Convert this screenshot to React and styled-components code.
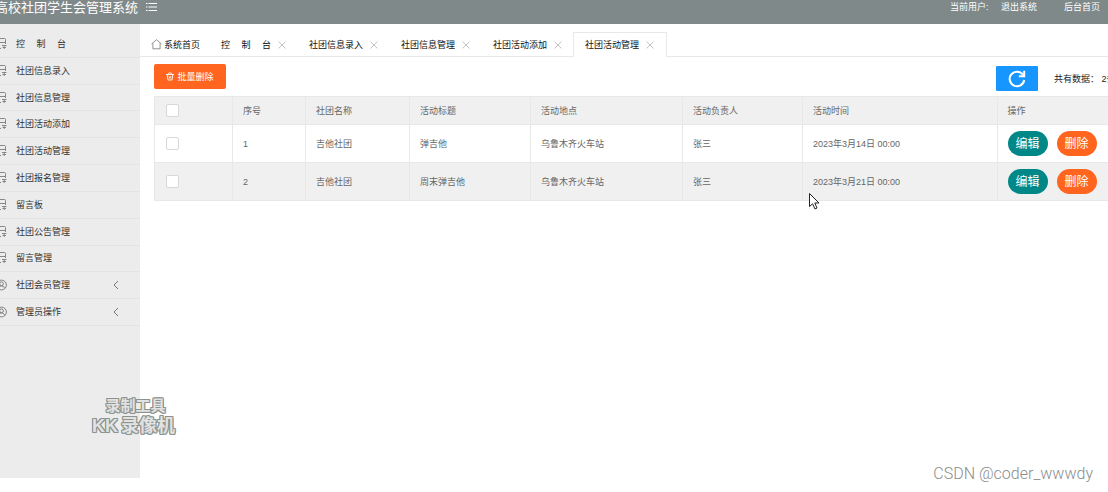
import React from "react";
import styled, { createGlobalStyle } from "styled-components";

const Global = createGlobalStyle`
  *, *::before, *::after { box-sizing: border-box; }
  body {
    margin: 0;
    background: #fff;
    color: #333;
    font: 9px/14px "Liberation Sans", "Noto Sans CJK SC", sans-serif;
    overflow: hidden;
  }
  button, input { font: inherit; margin: 0; }
  a { color: inherit; text-decoration: none; }
`;

const Page = styled.div`
  position: relative;
  min-height: 100vh;
  overflow: hidden;
`;

const Header = styled.header`
  display: flex;
  align-items: flex-start;
  height: 24px;
  background: #808989;
  color: #fff;
`;

const Brand = styled.h1`
  margin: 0 8px 0 -5px;
  font-size: 13px;
  font-weight: 400;
  line-height: 16px;
  white-space: nowrap;
`;

const PlainButton = styled.button`
  display: flex;
  padding: 0;
  border: 0;
  background: none;
  color: inherit;
`;

const MenuButton = styled(PlainButton)`
  padding-top: 2px;
`;

const UserNav = styled.nav`
  display: flex;
  margin-left: auto;
  padding-right: 8px;
  white-space: nowrap;
`;

const UserLabel = styled.span`
  width: 51px;
`;

const UserLink = styled.a`
  & + & { margin-left: 27px; }
`;

const Body = styled.div`
  display: flex;
  align-items: flex-start;
`;

const Sidebar = styled.nav`
  flex: 0 0 140px;
  min-height: 454px;
  padding-top: 7px;
  background: #ececec;
`;

const MenuList = styled.ul`
  display: grid;
  grid-auto-rows: 1fr;
  min-height: 295px;
  margin: 0;
  padding: 0;
  list-style: none;
`;

const MenuItem = styled.li`
  display: flex;
  border-bottom: 1px solid #e4e4e4;
`;

const MenuLink = styled.a`
  display: flex;
  flex: 1;
  align-items: center;
  gap: 9px;
  margin-left: -5px;
  padding-right: 21px;
  white-space: pre;
`;

const MenuText = styled.span`
  flex: 1;
`;

const Main = styled.main`
  flex: 1;
  min-width: 0;
`;

const Tabs = styled.div`
  display: flex;
  margin-top: 8px;
  height: 25px;
  border-bottom: 1px solid #e8e8e8;
`;

const Tab = styled.div`
  display: flex;
  align-items: center;
  gap: 7px;
  height: 25px;
  padding: 0 12px 0 11px;
  border: 1px solid ${(p) => (p.$active ? "#e8e8e8" : "transparent")};
  border-bottom-color: ${(p) => (p.$active ? "#fff" : "transparent")};
  border-width: 1px 0;
  box-shadow: ${(p) => (p.$active ? "-1px 0 #e8e8e8, 1px 0 #e8e8e8" : "none")};
  color: #111;
  white-space: pre;
`;

const HomeTab = styled(Tab)`
  gap: 2px;
  padding-right: 10px;
`;

const Toolbar = styled.div`
  display: flex;
  align-items: flex-start;
  justify-content: space-between;
  padding: 7px 0 5px 14px;
`;

const DeleteButton = styled.button`
  display: flex;
  align-items: center;
  justify-content: center;
  gap: 3px;
  width: 72px;
  height: 25px;
  padding: 0;
  border: 0;
  border-radius: 2px;
  background: #ff651e;
  color: #fff;
`;

const Summary = styled.div`
  display: flex;
  align-items: center;
  gap: 16px;
  width: 112px;
  padding-top: 2px;
  color: #222;
  white-space: nowrap;
`;

const RefreshButton = styled.button`
  display: flex;
  flex: 0 0 42px;
  align-items: center;
  justify-content: center;
  height: 25px;
  padding: 0;
  border: 0;
  border-radius: 1px;
  background: #1896ff;
  color: #fff;
`;

const TableWrap = styled.div`
  padding-left: 14px;
`;

const Table = styled.table`
  width: 100%;
  border-collapse: collapse;
  table-layout: fixed;
  color: #666;
`;

const Col = styled.col`
  width: ${(p) => (p.$width ? `${p.$width}px` : "auto")};
`;

const Row = styled.tr`
  height: ${(p) => (p.$head ? 28 : 38)}px;
  background: ${(p) => (p.$shaded ? "#f0f0f0" : "#fff")};
`;

const cell = `
  padding: 0 0 0 10px;
  border: 1px solid #e8e8e8;
  border-right: 0;
  font-weight: 400;
  text-align: left;
  white-space: nowrap;
`;
const Th = styled.th`${cell}`;
const Td = styled.td`${cell}`;

const Check = styled.input`
  display: block;
  width: 13px;
  height: 13px;
  margin-left: 1px;
  border: 1px solid #d8d8d8;
  border-radius: 2px;
  background: #fff;
  appearance: none;
`;

const Actions = styled.div`
  display: flex;
  gap: 9px;
`;

const Pill = styled.button`
  width: 40px;
  height: 25px;
  padding: 0;
  border: 0;
  border-radius: 13px;
  background: ${(p) => (p.$danger ? "#ff651e" : "#008888")};
  color: #fff;
  && { font-size: 12px; }
`;

const RecorderMark = styled.div`
  position: absolute;
  left: 92px;
  top: 396px;
  display: flex;
  flex-direction: column;
  align-items: center;
  color: #e2e2e2;
  font-family: "Liberation Sans", "Noto Sans CJK SC", sans-serif;
  font-weight: 700;
  text-shadow: 1px 0 #8b9490, -1px 0 #8b9490, 0 1px #8b9490, 0 -1px #8b9490,
    1px 1px #8b9490, -1px -1px #8b9490, 1px -1px #8b9490, -1px 1px #8b9490;
`;

const RecorderCaption = styled.span`
  padding-left: 4px;
  font-size: 15px;
  line-height: 20px;
`;

const RecorderName = styled.span`
  display: flex;
  gap: 3px;
  font-size: 18px;
  line-height: 20px;
`;

const Credit = styled.div`
  position: absolute;
  right: 15px;
  bottom: 8px;
  color: #8c8c8c;
  font-family: Roboto, sans-serif;
  font-size: 16px;
  font-weight: 300;
  line-height: 20px;
`;

const Pointer = styled.svg`
  position: absolute;
  left: 808px;
  top: 192px;
`;

const FormIcon = () => (
  <svg width="12" height="12" viewBox="0 0 12 12" fill="none" stroke="#888">
    <path d="M6 10.500H2.500Q1.500 10.500 1.500 9.500V2Q1.500 0.500 2.500 0.500H9.500Q10.500 0.500 10.500 1.500V6M3 4.500H10.500" />
    <path d="M7 7.500H11.500M7.500 9.500H11M9.200 7.500V11" />
  </svg>
);

const MemberIcon = () => (
  <svg width="12" height="12" viewBox="0 0 12 12" fill="none" stroke="#777" strokeWidth="0.9">
    <circle cx="6.500" cy="6" r="4.900" />
    <circle cx="6.500" cy="4.800" r="1.900" />
    <path d="M3.300 9.300Q4 6.900 6.500 6.900T9.700 9.300" />
  </svg>
);

const ChevronIcon = () => (
  <svg width="6" height="10" viewBox="0 0 6 10" fill="none" stroke="#777">
    <path d="M5 1L1 5L5 9" />
  </svg>
);

const CloseIcon = () => (
  <svg width="8" height="8" viewBox="0 0 8 8" fill="none" stroke="#bbb" strokeWidth="0.9">
    <path d="M0.500 0.500L7.500 7.500M7.500 0.500L0.500 7.500" />
  </svg>
);

const HomeIcon = () => (
  <svg width="11" height="11" viewBox="0 0 11 11" fill="none" stroke="#777" strokeWidth="0.8">
    <path d="M0.500 5L5.500 0.700L10.500 5M1.900 4.200V9.800H9.100V4.200" />
  </svg>
);

const ListIcon = () => (
  <svg width="11" height="10" viewBox="0 0 11 10" stroke="#fff">
    <path d="M0 1.500H1.500M2.500 1.500H11M0 5H1.500M2.500 5H11M0 8.500H1.500M2.500 8.500H11" />
  </svg>
);

const TrashIcon = () => (
  <svg width="8" height="9" viewBox="0 0 8 9" fill="none" stroke="#fff" strokeWidth="0.900">
    <path d="M0 2.500H8M2 2.300Q2.300 0.800 4 0.800T6 2.300M1.300 2.500V5M6.700 2.500V5M1.500 4.500L2 8H6L6.500 4.500M3.300 4.200V6.500M4.700 4.200V6.500" />
  </svg>
);

const RefreshIcon = () => (
  <svg width="18" height="18" viewBox="0 0 18 18" fill="none" stroke="#fff" strokeWidth="2">
    <path d="M15 4.800A7.300 7.300 0 1 0 16.200 10" />
    <path d="M16.200 0.800V6.200H10.800" />
  </svg>
);

const SPACED = "控\u3000 制\u3000 台";

const MENU = [
  SPACED, "社团信息录入", "社团信息管理", "社团活动添加", "社团活动管理",
  "社团报名管理", "留言板", "社团公告管理", "留言管理",
];
const GROUPS = ["社团会员管理", "管理员操作"];
const TABS = [SPACED, "社团信息录入", "社团信息管理", "社团活动添加", "社团活动管理"];
const COLUMNS = ["序号", "社团名称", "活动标题", "活动地点", "活动负责人", "活动时间", "操作"];
const WIDTHS = [78, 73, 104, 121, 152, 120, null, 111];
const ROWS = [
  ["1", "吉他社团", "弹吉他", "乌鲁木齐火车站", "张三", "2023年3月14日 00:00"],
  ["2", "吉他社团", "周末弹吉他", "乌鲁木齐火车站", "张三", "2023年3月21日 00:00"],
];

export default function App() {
  return (
    <Page>
      <Global />
      <Header>
        <Brand>高校社团学生会管理系统</Brand>
        <MenuButton aria-label="菜单"><ListIcon /></MenuButton>
        <UserNav>
          <UserLabel>当前用户:</UserLabel>
          <UserLink href="#logout">退出系统</UserLink>
          <UserLink href="#home">后台首页</UserLink>
        </UserNav>
      </Header>
      <Body>
        <Sidebar>
          <MenuList>
            {MENU.map((name) => (
              <MenuItem key={name}>
                <MenuLink href="#menu"><FormIcon /><MenuText>{name}</MenuText></MenuLink>
              </MenuItem>
            ))}
            {GROUPS.map((name) => (
              <MenuItem key={name}>
                <MenuLink href="#menu"><MemberIcon /><MenuText>{name}</MenuText><ChevronIcon /></MenuLink>
              </MenuItem>
            ))}
          </MenuList>
        </Sidebar>
        <Main>
          <Tabs>
            <HomeTab><HomeIcon /><a href="#home">系统首页</a></HomeTab>
            {TABS.map((name, i) => (
              <Tab key={name} $active={i === TABS.length - 1}>
                <a href="#tab">{name}</a>
                <PlainButton aria-label="关闭"><CloseIcon /></PlainButton>
              </Tab>
            ))}
          </Tabs>
          <Toolbar>
            <DeleteButton><TrashIcon />批量删除</DeleteButton>
            <Summary>
              <RefreshButton aria-label="刷新"><RefreshIcon /></RefreshButton>
              <span>共有数据： 2条</span>
            </Summary>
          </Toolbar>
          <TableWrap>
            <Table>
              <colgroup>{WIDTHS.map((w, i) => <Col key={i} $width={w} />)}</colgroup>
              <thead>
                <Row $head $shaded>
                  <Th><Check type="checkbox" aria-label="全选" /></Th>
                  {COLUMNS.map((c) => <Th key={c}>{c}</Th>)}
                </Row>
              </thead>
              <tbody>
                {ROWS.map((row, i) => (
                  <Row key={row[0]} $shaded={i % 2 === 1}>
                    <Td><Check type="checkbox" aria-label={`选择 ${row[0]}`} /></Td>
                    {row.map((v, j) => <Td key={j}>{v}</Td>)}
                    <Td><Actions><Pill>编辑</Pill><Pill $danger>删除</Pill></Actions></Td>
                  </Row>
                ))}
              </tbody>
            </Table>
          </TableWrap>
        </Main>
      </Body>
      <RecorderMark>
        <RecorderCaption>录制工具</RecorderCaption>
        <RecorderName><span>KK</span>录像机</RecorderName>
      </RecorderMark>
      <Pointer width="12" height="19" viewBox="0 0 12 19" fill="#fff" stroke="#222">
        <path d="M1.500 1.500V14.500L4.600 11.800L7 17L9 16L6.800 11H11Z" />
      </Pointer>
      <Credit>CSDN @coder_wwwdy</Credit>
    </Page>
  );
}
